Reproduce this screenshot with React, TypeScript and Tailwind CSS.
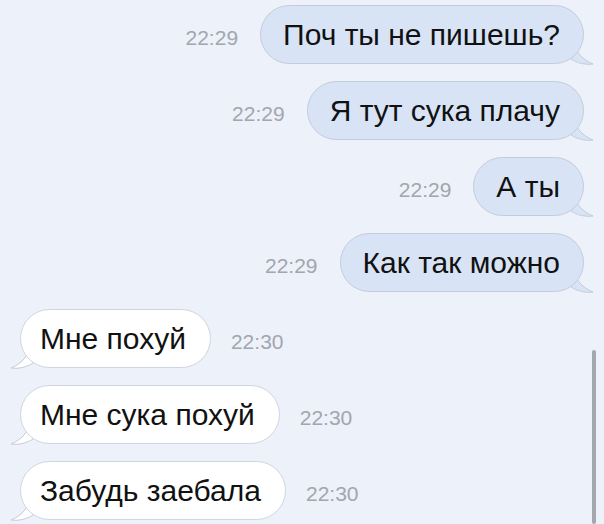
const font = { fontFamily: '"Liberation Sans", Arial, sans-serif' };

type Msg = { text: string; time: string; out: boolean };

const messages: Msg[] = [
  { text: "Поч ты не пишешь?", time: "22:29", out: true },
  { text: "Я тут сука плачу", time: "22:29", out: true },
  { text: "А ты", time: "22:29", out: true },
  { text: "Как так можно", time: "22:29", out: true },
  { text: "Мне похуй", time: "22:30", out: false },
  { text: "Мне сука похуй", time: "22:30", out: false },
  { text: "Забудь заебала", time: "22:30", out: false },
];

const Tail = ({ out }: { out: boolean }) => (
  <svg
    width="24"
    height="26"
    viewBox="0 0 24 26"
    className={out ? "absolute -right-[11px] bottom-[-1px]" : "absolute -left-[11px] bottom-[-1px] -scale-x-100"}
  >
    <path
      d="M2 0 C 4 12 10 20 22 25 C 14 26 6 24 0 20 Z"
      fill={out ? "#d8e4f6" : "#ffffff"}
      stroke="#c3ccd9"
      strokeWidth="1"
    />
  </svg>
);

const Bubble = ({ m }: { m: Msg }) => (
  <div className="relative">
    <Tail out={m.out} />
    <div
      className={
        "relative h-[59px] flex items-center rounded-[30px] border text-[30px] text-[#111] leading-none " +
        (m.out
          ? "bg-[#d8e4f6] border-[#c3ccd9] pl-[22px] pr-[23px]"
          : "bg-white border-[#cfd5df] pl-[19px] pr-[24px]")
      }
    >
      {m.text}
    </div>
  </div>
);

const Time = ({ t }: { t: string }) => (
  <span className="pt-[7px] text-[21px] text-[#a2a6ae]">{t}</span>
);

export default function App() {
  return (
    <div style={font} className="relative w-[604px] h-[524px] overflow-hidden bg-[#edf1f9]">
      <div className="flex flex-col gap-[17px] pt-[5px]">
        {messages.map((m, i) =>
          m.out ? (
            <div key={i} className="flex items-center justify-end gap-[22px] pr-[20px]">
              <Time t={m.time} />
              <Bubble m={m} />
            </div>
          ) : (
            <div key={i} className="flex items-center gap-[20px] pl-[20px]">
              <Bubble m={m} />
              <Time t={m.time} />
            </div>
          )
        )}
      </div>
      <div className="absolute right-[8px] top-[350px] bottom-0 w-[4px] rounded-full bg-[#a3a7b0]" />
    </div>
  );
}
